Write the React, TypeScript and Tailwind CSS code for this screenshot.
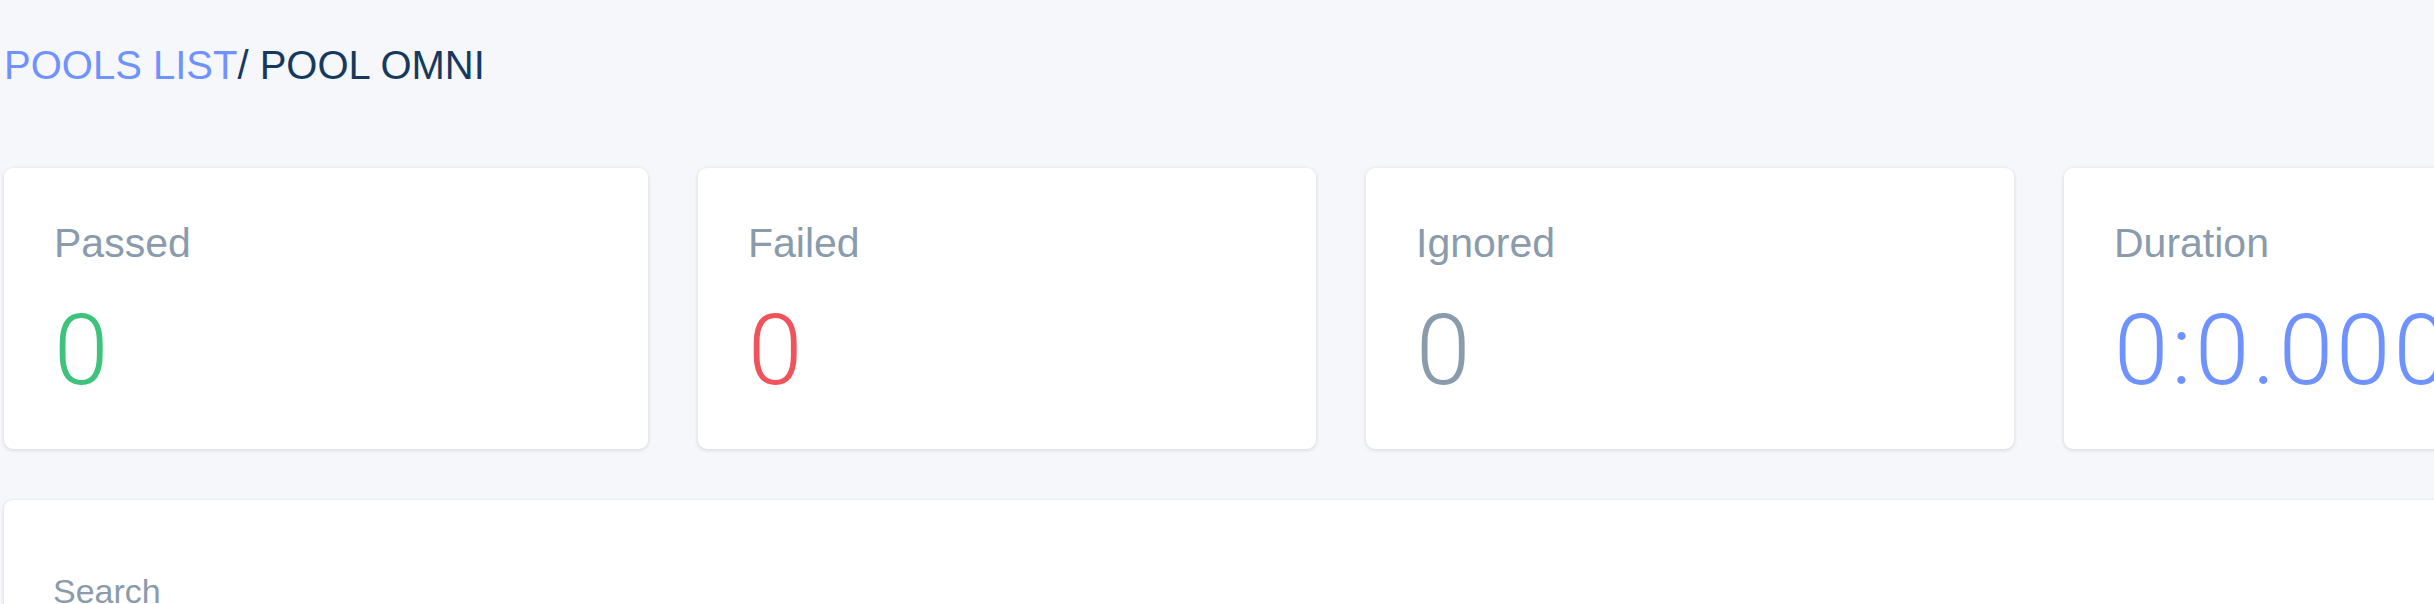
const stats = [
  { label: 'Passed', value: '0', width: 'w-[644px]', color: 'text-[#3ec27c]' },
  { label: 'Failed', value: '0', width: 'w-[618px]', color: 'text-[#ef535b]' },
  { label: 'Ignored', value: '0', width: 'w-[648px]', color: 'text-[#8a9bac]' },
  { label: 'Duration', value: '0:0.000', width: 'w-[720px]', color: 'text-[#7092ff]' },
];

function StatCard({ label, value, width, color }: (typeof stats)[number]) {
  return (
    <div
      className={`${width} shrink-0 rounded-[9px] bg-white pl-[50px] pr-[52px] pt-[51px] pb-[49px] shadow-[0_1px_4px_rgba(0,0,0,0.14)]`}
    >
      <div className="text-[41px] leading-[48px] text-[#8a9bac] font-['Liberation_Sans',Arial,sans-serif]">
        {label}
      </div>
      <div
        className={`mt-[35px] text-[98px] leading-none font-light tracking-[3px] whitespace-nowrap ${color} font-['Roboto','Liberation_Sans',sans-serif]`}
      >
        {value}
      </div>
    </div>
  );
}

export default function App() {
  return (
    <div className="h-[604px] w-full overflow-hidden bg-[#f6f7fb] px-[4px] font-['Liberation_Sans',Arial,sans-serif]">
      {/* breadcrumb */}
      <h1 className="pt-[41px] text-[40px] leading-[48px] whitespace-nowrap">
        <span className="text-[#7092ff]">POOLS LIST</span>
        <span className="text-[#163a5f]">/ POOL OMNI</span>
      </h1>

      <div className="mt-[79px] flex gap-[50px]">
        {stats.map((s) => (
          <StatCard key={s.label} {...s} />
        ))}
      </div>

      <div className="mt-[51px] w-[2700px] rounded-[9px] bg-white px-[49px] pt-[71px] pb-[40px] shadow-[0_1px_4px_rgba(0,0,0,0.14)]">
        <div className="text-[34px] leading-[40px] text-[#8a9bac]">Search</div>
      </div>
    </div>
  );
}
